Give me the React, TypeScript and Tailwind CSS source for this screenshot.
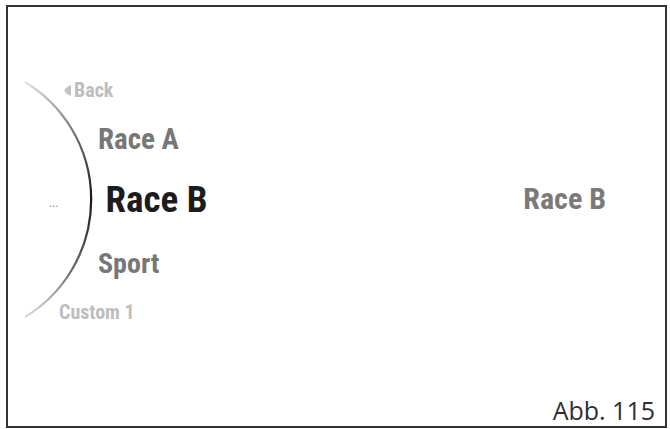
import React from "react";

const narrow = {
  fontFamily: '"Liberation Sans Narrow", "Arial Narrow", "Roboto Condensed", "Liberation Sans", sans-serif',
};

function DialArc() {
  return (
    <svg
      className="pointer-events-none absolute left-0 top-0"
      width="120"
      height="330"
      viewBox="0 0 120 330"
      fill="none"
    >
      <defs>
        <linearGradient id="arcShade" gradientUnits="userSpaceOnUse" x1="0" y1="75" x2="0" y2="310">
          <stop offset="0" stopColor="#e0e0e0" />
          <stop offset="0.2" stopColor="#7a7a7a" />
          <stop offset="0.5" stopColor="#151515" />
          <stop offset="0.8" stopColor="#6a6a6a" />
          <stop offset="1" stopColor="#dcdcdc" />
        </linearGradient>
      </defs>
      <path d="M 17 75 A 137.4 137.4 0 0 1 17 310" stroke="url(#arcShade)" strokeWidth="2.2" />
    </svg>
  );
}

export default function App() {
  return (
    <div className="h-[429px] w-[670px] bg-white pb-px pl-[6px] pr-[3px] pt-[5px]">
      <div className="flex h-full flex-col border-2 border-[#333333]">
        <div className="relative flex flex-1 items-start">
          <DialArc />
          <div className="flex flex-col leading-none" style={narrow}>
            <div className="ml-[56px] mt-[73px] flex items-center gap-[3px] text-[20px] font-bold text-[#bdbdbd]">
              <svg width="7" height="11" viewBox="0 0 7 11">
                <path d="M7 0 C4 1 0.5 3.5 0.5 5.5 C0.5 7.5 4 10 7 11 Z" fill="#c4c4c4" />
              </svg>
              <span>Back</span>
            </div>
            <div className="ml-[90px] mt-[25px] text-[29px] font-bold text-[#777777]">Race A</div>
            <div className="mt-[27px] flex items-center">
              <span className="ml-[41px] mt-[6px] text-[12px] font-normal text-[#8a8a8a]">...</span>
              <span className="ml-[47px] text-[37px] font-bold text-[#1c1c1c]">Race B</span>
            </div>
            <div className="ml-[90px] mt-[32px] text-[28px] font-bold text-[#777777]">Sport</div>
            <div className="ml-[51px] mt-[24px] text-[20px] font-bold text-[#bdbdbd]">Custom 1</div>
          </div>
          <div
            className="ml-auto mr-[59px] mt-[177px] text-[30px] font-bold leading-none text-[#7a7a7a]"
            style={narrow}
          >
            Race B
          </div>
        </div>
        <div
          className="flex justify-end pb-[3px] pr-[10px] text-[25px] leading-none text-[#2e2e2e]"
          style={{ fontFamily: '"Open Sans", sans-serif' }}
        >
          Abb. 115
        </div>
      </div>
    </div>
  );
}
